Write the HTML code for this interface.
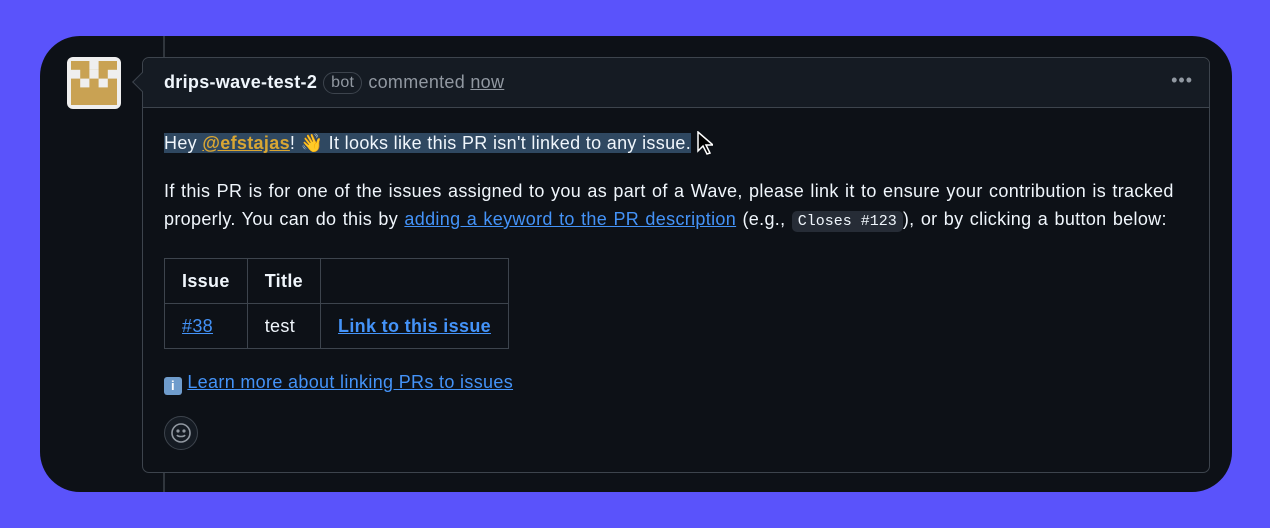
<!DOCTYPE html>
<html><head><style>
*{margin:0;padding:0;box-sizing:border-box}
body{width:1270px;height:528px;background:#5a53fb;font-family:"Liberation Sans",sans-serif;position:relative;overflow:hidden}
.panel{position:absolute;left:40px;top:36px;width:1192px;height:456px;background:#0d1117;border-radius:40px}
.line{position:absolute;left:163px;top:36px;width:2px;height:456px;background:#30363d}
.av{position:absolute;left:67px;top:57px;width:54px;height:52px;border-radius:6px;background:#efefef;padding:4px}
.av svg{display:block}
.box{position:absolute;left:142px;top:57px;width:1068px;height:416px;border:1px solid #3d444d;border-radius:7px;background:#0d1117}
.hdr{height:50px;background:#151b23;border-bottom:1px solid #3d444d;border-radius:7px 7px 0 0;display:flex;align-items:center;padding-left:21px;font-size:18px;color:#9198a1;letter-spacing:0.3px}
.hdr b{color:#f0f6fc;margin-right:6px}
.bot{border:1px solid #3d444d;border-radius:12px;padding:1px 7px;font-size:16px;margin-right:6px}
.hdr u{text-decoration-color:#9198a1}
.dots{position:absolute;right:16px;top:12px;color:#9198a1;font-size:18px;letter-spacing:1px}
.arrow{position:absolute;left:-8px;top:17px;width:14px;height:14px;background:#151b23;border-left:1px solid #3d444d;border-bottom:1px solid #3d444d;transform:rotate(45deg)}
.body{position:absolute;left:21px;top:72px;color:#f0f6fc;font-size:18px;line-height:28px;letter-spacing:0.33px;white-space:nowrap}
.hl{background:#2f4861}
.men{color:#d9a633;font-weight:bold;text-decoration:underline}
a{color:#4493f8;text-decoration:underline}
code{font-family:"Liberation Mono",monospace;font-size:15px;background:#262c36;border-radius:5px;padding:2px 6px;letter-spacing:0;word-spacing:0}
table{border-collapse:collapse;margin-top:22px}
td,th{border:1px solid #3d444d;padding:8px 17px;text-align:left;height:45px;white-space:nowrap}
th{font-weight:bold}
.smile{position:absolute;left:21px;top:358px;width:34px;height:34px;border-radius:50%;border:1px solid #3d444d;background:#151b23;display:flex;align-items:center;justify-content:center}
</style></head><body>
<div class="panel"></div>
<div class="line"></div>
<div class="av"><svg width="46" height="44" viewBox="0 0 5 5" preserveAspectRatio="none"><rect width="5" height="5" fill="#c9a253"/><rect x="0" y="1" width="1" height="1" fill="#efefef"/><rect x="2" y="1" width="1" height="1" fill="#efefef"/><rect x="4" y="1" width="1" height="1" fill="#efefef"/><rect x="1" y="2" width="1" height="1" fill="#efefef"/><rect x="3" y="2" width="1" height="1" fill="#efefef"/><rect x="2" y="0" width="1" height="1" fill="#efefef"/></svg></div>
<div class="box">
<div class="arrow"></div>
<div class="hdr"><b>drips-wave-test-2</b><span class="bot">bot</span>commented&nbsp;<u>now</u></div>
<div class="dots">•••</div>
<div class="body">
<p style="margin-top:-1px"><span class="hl">Hey <span class="men">@efstajas</span>! 👋 It looks like this PR isn't linked to any issue.</span></p>
<p style="margin-top:20px;word-spacing:1px">If this PR is for one of the issues assigned to you as part of a Wave, please link it to ensure your contribution is tracked<br>properly. You can do this by <a>adding a keyword to the PR description</a> (e.g., <code>Closes #123</code>), or by clicking a button below:</p>
<table><tr><th>Issue</th><th>Title</th><th style="width:186px"></th></tr>
<tr><td><a>#38</a></td><td>test</td><td><a style="font-weight:bold">Link to this issue</a></td></tr></table>
<p style="margin-top:19px"><span style="display:inline-block;width:18px;height:18px;background:#6f9ccc;border-radius:3px;color:#fff;font-size:13px;text-align:center;line-height:18px;vertical-align:-2px;font-weight:bold">i</span> <a>Learn more about linking PRs to issues</a></p>
</div>
<div class="smile"><svg width="22" height="22" viewBox="0 0 22 22" fill="none" stroke="#9198a1" stroke-width="1.6"><circle cx="11" cy="11" r="9"/><path d="M7 13c1 2 7 2 8 0"/><circle cx="8" cy="9" r=".8" fill="#9198a1"/><circle cx="14" cy="9" r=".8" fill="#9198a1"/></svg></div>
</div>
<svg style="position:absolute;left:697px;top:131px" width="16" height="24" viewBox="0 0 16 24"><path d="M1 1v19l5-5 4 8 3-1-4-8h7z" fill="#000" stroke="#fff" stroke-width="1.5"/></svg>
</body></html>
